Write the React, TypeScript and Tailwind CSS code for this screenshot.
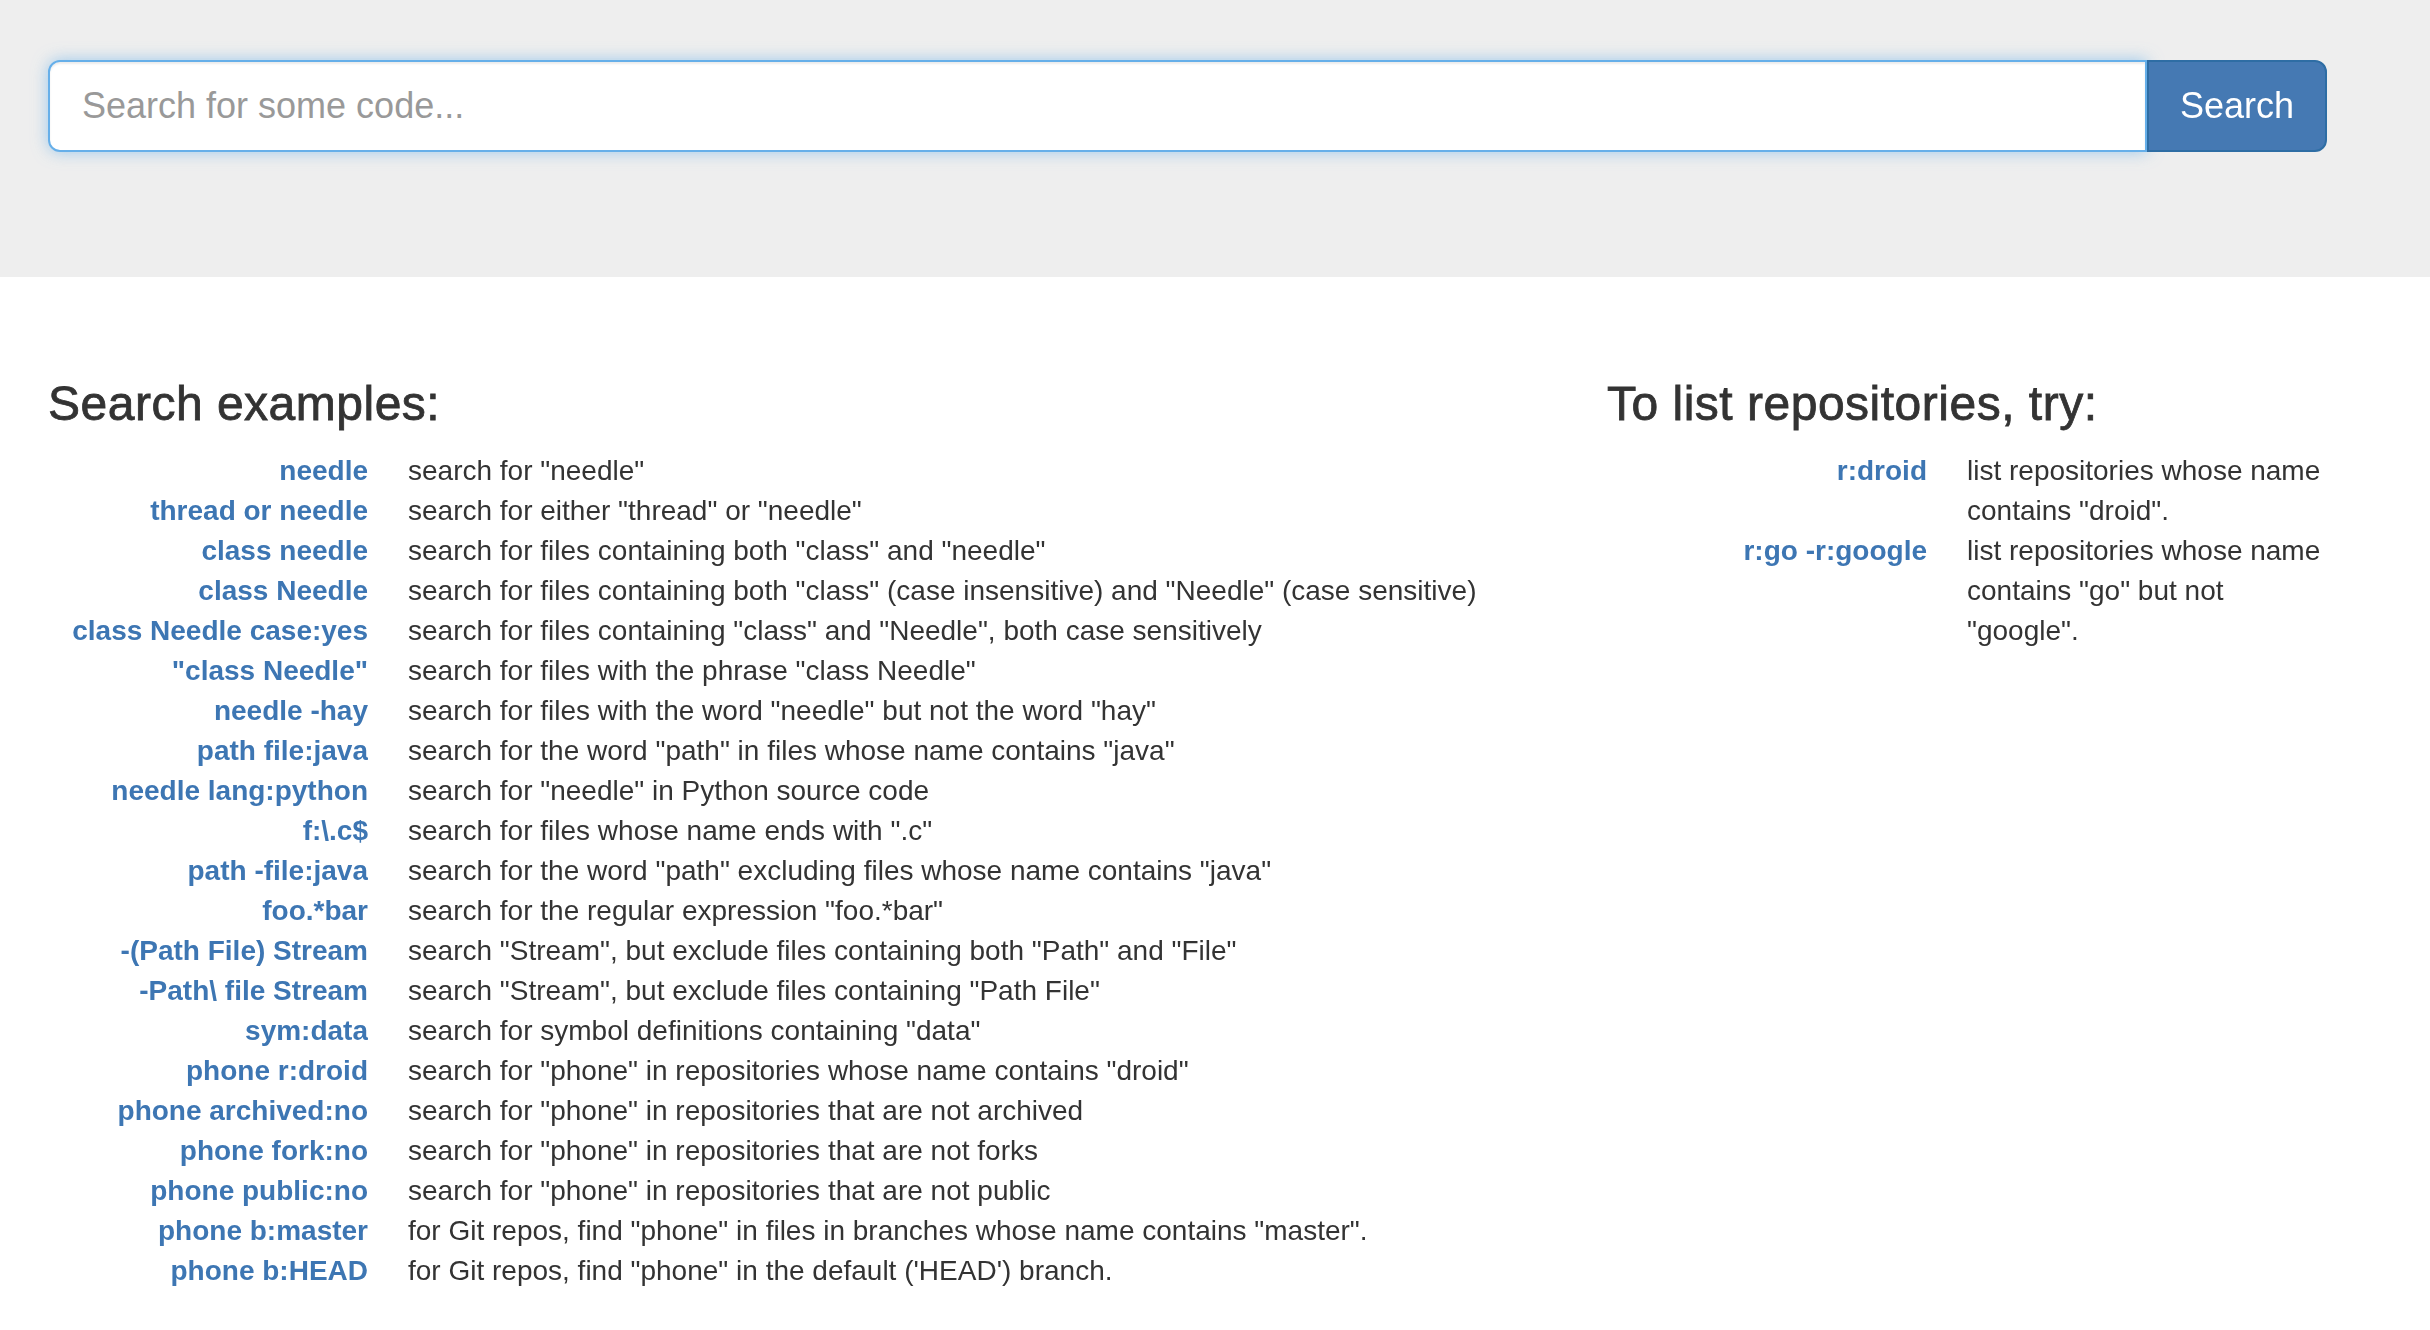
import React from "react"

interface Example {
  query: string
  text: string
}

const searchExamples: Example[] = [
  { query: "needle", text: 'search for "needle"' },
  { query: "thread or needle", text: 'search for either "thread" or "needle"' },
  { query: "class needle", text: 'search for files containing both "class" and "needle"' },
  {
    query: "class Needle",
    text: 'search for files containing both "class" (case insensitive) and "Needle" (case sensitive)',
  },
  {
    query: "class Needle case:yes",
    text: 'search for files containing "class" and "Needle", both case sensitively',
  },
  { query: '"class Needle"', text: 'search for files with the phrase "class Needle"' },
  { query: "needle -hay", text: 'search for files with the word "needle" but not the word "hay"' },
  { query: "path file:java", text: 'search for the word "path" in files whose name contains "java"' },
  { query: "needle lang:python", text: 'search for "needle" in Python source code' },
  { query: "f:\\.c$", text: 'search for files whose name ends with ".c"' },
  {
    query: "path -file:java",
    text: 'search for the word "path" excluding files whose name contains "java"',
  },
  { query: "foo.*bar", text: 'search for the regular expression "foo.*bar"' },
  {
    query: "-(Path File) Stream",
    text: 'search "Stream", but exclude files containing both "Path" and "File"',
  },
  { query: "-Path\\ file Stream", text: 'search "Stream", but exclude files containing "Path File"' },
  { query: "sym:data", text: 'search for symbol definitions containing "data"' },
  { query: "phone r:droid", text: 'search for "phone" in repositories whose name contains "droid"' },
  { query: "phone archived:no", text: 'search for "phone" in repositories that are not archived' },
  { query: "phone fork:no", text: 'search for "phone" in repositories that are not forks' },
  { query: "phone public:no", text: 'search for "phone" in repositories that are not public' },
  {
    query: "phone b:master",
    text: 'for Git repos, find "phone" in files in branches whose name contains "master".',
  },
  { query: "phone b:HEAD", text: "for Git repos, find \"phone\" in the default ('HEAD') branch." },
]

const repoExamples: Example[] = [
  { query: "r:droid", text: 'list repositories whose name contains "droid".' },
  { query: "r:go -r:google", text: 'list repositories whose name contains "go" but not "google".' },
]

function ExampleList({ items }: { items: Example[] }) {
  return (
    <dl className="mb-[40px]">
      {items.map((item) => (
        <div key={item.query} className="grid grid-cols-[320px_1fr] gap-x-[40px]">
          <dt className="truncate text-right font-bold">
            <a href="#" className="text-[#3d76b3] no-underline">
              {item.query}
            </a>
          </dt>
          <dd>{item.text}</dd>
        </div>
      ))}
    </dl>
  )
}

export default function App() {
  return (
    <div className="min-h-screen w-[2430px] bg-white font-['Liberation_Sans',Arial,sans-serif] text-[28px] leading-[40px] text-[#333333]">
      <div className="h-[277px] bg-[#eeeeee] pl-[48px] pt-[60px]">
        <form className="flex w-[2279px]" onSubmit={(e) => e.preventDefault()}>
          <input
            type="text"
            autoFocus
            placeholder="Search for some code..."
            className="h-[92px] flex-1 rounded-l-[12px] border-2 border-[#66afe9] bg-white px-[32px] text-[36px] text-[#555555] shadow-[inset_0_2px_2px_rgba(0,0,0,0.075),0_0_16px_rgba(102,175,233,0.6)] outline-none placeholder:text-[#999999]"
          />
          <button
            type="submit"
            className="h-[92px] w-[180px] rounded-r-[12px] border-2 border-[#2e6da4] bg-[#4579b3] text-[36px] text-white"
          >
            Search
          </button>
        </form>
      </div>

      <div className="flex pl-[48px] pt-[101px]">
        <div className="w-[1559px] pr-[30px]">
          <h3 className="mb-[20px] text-[48px] leading-[1.1] font-medium tracking-[0.5px] [-webkit-text-stroke:0.8px_#333333]">
            Search examples:
          </h3>
          <ExampleList items={searchExamples} />
        </div>
        <div className="w-[719px]">
          <h3 className="mb-[20px] text-[48px] leading-[1.1] font-medium tracking-[0.5px] [-webkit-text-stroke:0.8px_#333333]">
            To list repositories, try:
          </h3>
          <ExampleList items={repoExamples} />
        </div>
      </div>
    </div>
  )
}
